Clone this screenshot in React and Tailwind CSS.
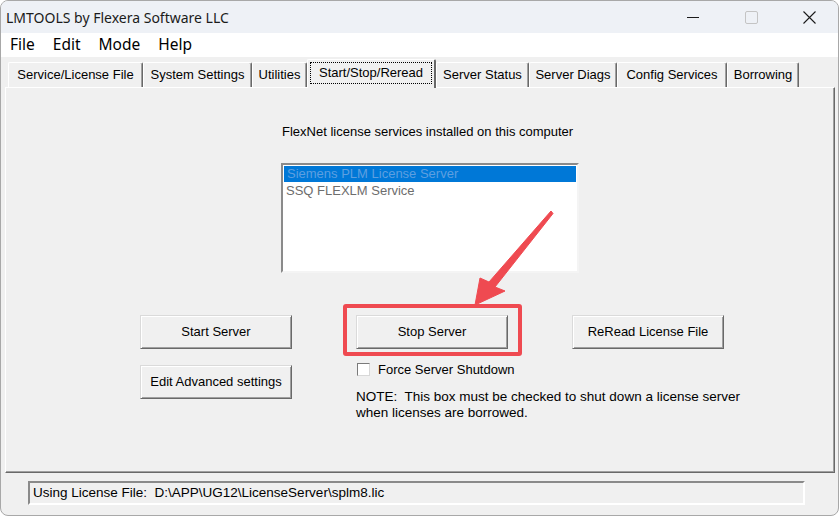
import React from "react";

const TABS = [
  { label: "Service/License File", w: "w-[135px]" },
  { label: "System Settings", w: "w-[109px]" },
  { label: "Utilities", w: "w-[55px]" },
  { label: "Start/Stop/Reread", w: "w-[129px]", active: true },
  { label: "Server Status", w: "w-[93px]" },
  { label: "Server Diags", w: "w-[88px]" },
  { label: "Config Services", w: "w-[110px]" },
  { label: "Borrowing", w: "w-[72px]" },
];

const dlgFont = { fontFamily: '"Liberation Sans", Arial, sans-serif' };
const uiFont = { fontFamily: '"Noto Sans", "Open Sans", sans-serif' };

function Btn({ children }) {
  return (
    <button className="w-[152px] h-[34px] shrink-0 bg-[#f0f0f0] border border-t-[#dadada] border-l-[#dadada] border-r-[#696969] border-b-[#696969] shadow-[inset_1px_1px_0_#ffffff,inset_-1px_-1px_0_#a0a0a0] text-[13px] text-black flex items-center justify-center whitespace-nowrap">
      {children}
    </button>
  );
}

function Tab({ label, w, active }) {
  if (active) {
    return (
      <div className={`${w} h-[29px] relative z-10 -mb-px bg-[#f0f0f0] border-t border-l border-t-white border-l-white border-r-2 border-r-[#696969] rounded-t-[2px] flex items-start pt-[2px] px-[2px]`}>
        <div className="h-[22px] w-full border border-dotted border-black flex items-center justify-center text-[13px] text-black">
          {label}
        </div>
      </div>
    );
  }
  return (
    <div className={`${w} h-[25px] bg-[#f0f0f0] border-t border-l border-t-white border-l-white border-r border-r-[#696969] shadow-[inset_-1px_0_0_#a0a0a0] rounded-t-[2px] flex items-center justify-center text-[13px] text-black`}>
      {label}
    </div>
  );
}

export default function App() {
  return (
    <div className="relative w-[840px] h-[516px] bg-white overflow-hidden">
      <div className="w-[839px] h-[516px] border border-[#a8a8a8] rounded-[8px] overflow-hidden bg-[#f0f0f0] flex flex-col">
        {/* title bar */}
        <div className="h-[32px] bg-[#eef1f6] flex items-center" style={uiFont}>
          <span className="pl-[5px] text-[14px] text-[#1b1b1b]">LMTOOLS by Flexera Software LLC</span>
          <div className="ml-auto flex h-full">
            <div className="w-[58px] flex items-center justify-center">
              <svg width="12" height="12" viewBox="0 0 12 12">
                <line x1="0" y1="6.5" x2="12" y2="6.5" stroke="#1b1b1b" strokeWidth="1" />
              </svg>
            </div>
            <div className="w-[58px] flex items-center justify-center">
              <svg width="13" height="13" viewBox="0 0 13 13">
                <rect x="0.5" y="0.5" width="12" height="12" rx="1.5" fill="none" stroke="#c4c4c4" strokeWidth="1" />
              </svg>
            </div>
            <div className="w-[58px] flex items-center justify-center">
              <svg width="13" height="13" viewBox="0 0 13 13">
                <path d="M0.5 0.5 L12.5 12.5 M12.5 0.5 L0.5 12.5" stroke="#1b1b1b" strokeWidth="1.1" />
              </svg>
            </div>
          </div>
        </div>

        {/* menu bar */}
        <div className="h-[24px] bg-white flex items-center gap-[18px] pl-[9px] text-[15.5px] text-black" style={uiFont}>
          <span>File</span>
          <span>Edit</span>
          <span>Mode</span>
          <span>Help</span>
        </div>

        <div style={dlgFont} className="flex flex-col">
          {/* tab strip */}
          <div className="h-[30px] flex items-end pl-[7px]">
            {TABS.map((t) => (
              <Tab key={t.label} {...t} />
            ))}
          </div>

          {/* tab page */}
          <div className="ml-[4px] w-[830px] h-[386px] border-t border-l border-t-white border-l-white border-r border-b border-r-[#696969] border-b-[#696969] shadow-[inset_-1px_-1px_0_#a0a0a0] flex flex-col">
            <div className="ml-[275px] pt-[36px] flex flex-col">
              <span className="pl-px text-[13px] leading-[15px] text-black">FlexNet license services installed on this computer</span>
              <div className="mt-[24px] w-[298px] h-[110px] bg-white border-2 border-t-[#8a8a8a] border-l-[#8a8a8a] border-r-[#f4f4f4] border-b-[#f4f4f4] p-px text-[13px]">
                <div className="h-[16px] bg-[#0078d7] text-[#5d9fe0] pl-[3px] leading-[16px]">Siemens PLM License Server</div>
                <div className="h-[17px] text-[#6d6d6d] pl-[2px] leading-[17px]">SSQ FLEXLM Service</div>
              </div>
            </div>

            <div className="ml-[134px] mt-[42px] flex items-start gap-[64px]">
              <div className="w-[152px] flex flex-col gap-[16px]">
                <Btn>Start Server</Btn>
                <Btn>Edit Advanced settings</Btn>
              </div>
              <div className="w-[152px] flex flex-col">
                <div className="relative w-[152px]">
                  <Btn>Stop Server</Btn>
                  <div className="absolute -left-[13px] -right-[14px] -top-[11px] -bottom-[7px] border-4 border-[#ef4a51] rounded-[3px]" />
                </div>
                <div className="mt-[11px] flex items-center gap-[8px] text-[13px] text-black whitespace-nowrap">
                  <span className="ml-[1px] w-[13px] h-[13px] shrink-0 bg-white border border-t-[#7a7a7a] border-l-[#7a7a7a] border-r-[#d8d8d8] border-b-[#d8d8d8]" />
                  <span>Force Server Shutdown</span>
                </div>
                <div className="mt-[9px] text-[13.5px] leading-[16px] text-black whitespace-nowrap">
                  <div>NOTE:&nbsp; This box must be checked to shut down a license server</div>
                  <div>when licenses are borrowed.</div>
                </div>
              </div>
              <Btn>ReRead License File</Btn>
            </div>
          </div>

          {/* status line */}
          <div className="mt-[8px] ml-[27px] w-[777px] h-[24px] border-2 border-t-[#8a8a8a] border-l-[#8a8a8a] border-r-white border-b-white flex items-center pl-[3px] text-[13.5px] text-black">
            Using License File:&nbsp; D:\APP\UG12\LicenseServer\splm8.lic
          </div>
        </div>
      </div>

      {/* pointer arrow */}
      <svg className="absolute left-0 top-0 pointer-events-none" width="840" height="516" viewBox="0 0 840 516">
        <polygon
          points="551,211 553,213.5 495,287 505,291 475,305 480,278 489,282"
          fill="#ef4a51"
          stroke="#ef4a51"
          strokeWidth="1"
          strokeLinejoin="round"
        />
      </svg>
    </div>
  );
}
